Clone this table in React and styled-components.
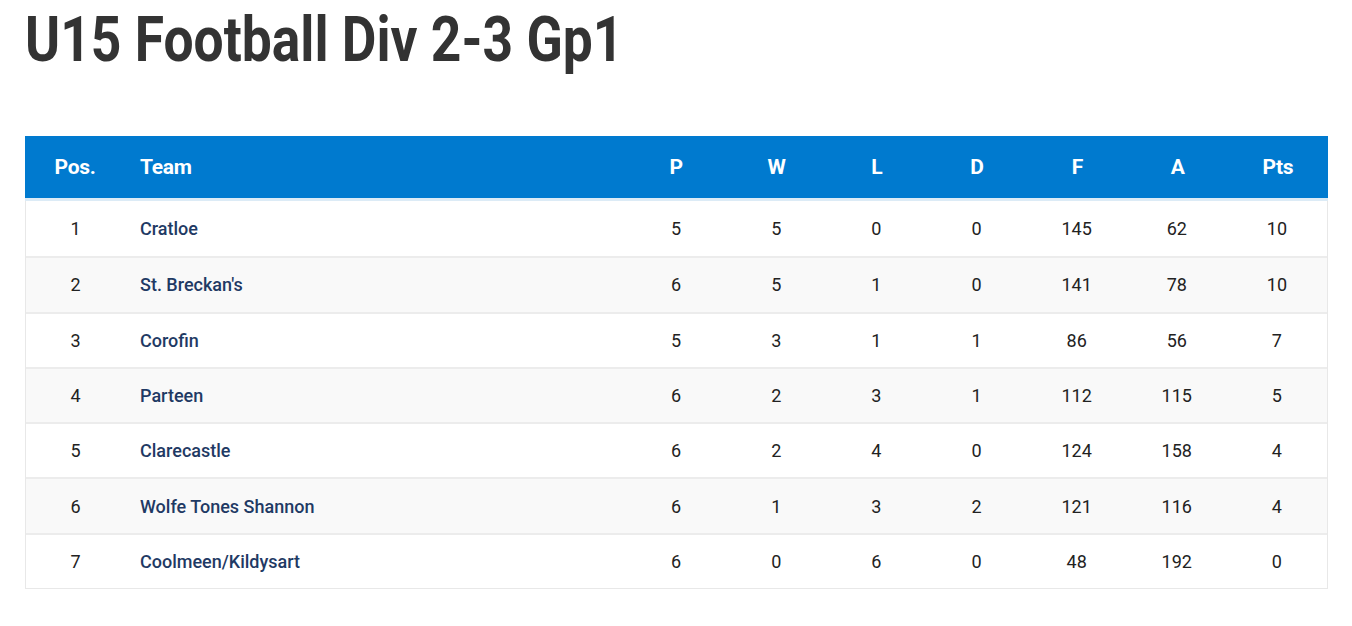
import styled, { createGlobalStyle } from 'styled-components';

const GlobalStyle = createGlobalStyle`
  body {
    margin: 0;
    background: #fff;
    font-family: Roboto, "Liberation Sans", sans-serif;
  }
`;

const Page = styled.div`
  padding: 9px 24px 36px 25px;
`;

const Title = styled.h1`
  margin: 0 0 65px;
  font-family: Roboto, sans-serif;
  font-weight: 700;
  font-size: 63px;
  line-height: 62px;
  color: #333;
  transform: scaleX(0.847);
  transform-origin: left center;
  white-space: nowrap;
`;

const Table = styled.div`
  box-sizing: border-box;
  width: 1303px;
  border: 1px solid #e8e8e8;
  border-top: none;
`;

const Grid = styled.div`
  display: grid;
  grid-template-columns: 99px 501px repeat(7, 1fr);
  align-items: center;
  box-sizing: border-box;
`;

const HeadRow = styled(Grid)`
  height: 65px;
  margin: 0 -1px;
  grid-template-columns: 100px 501px repeat(7, 1fr);
  background: #007acf;
  color: #fff;
  font-weight: 700;
  font-size: 21px;
  border-bottom: 3px solid #dcebf6;
`;

const HeadCell = styled.div`
  text-align: ${p => (p.$left ? 'left' : 'center')};
  padding-left: ${p => (p.$left ? '15px' : '0')};
  letter-spacing: -0.3px;
`;

const Row = styled(Grid)`
  height: 55.3px;
  background: ${p => (p.$alt ? '#f9f9f9' : '#fff')};
  border-top: ${p => (p.$first ? 'none' : '2px solid #ececec')};
  font-size: 18px;
  color: #222;
`;

const Cell = styled.div`
  text-align: center;
`;

const Team = styled.div`
  padding-left: 15px;
  font-weight: 500;
  color: #1f3a64;
`;

const teams = [
  [1, 'Cratloe', 5, 5, 0, 0, 145, 62, 10],
  [2, "St. Breckan's", 6, 5, 1, 0, 141, 78, 10],
  [3, 'Corofin', 5, 3, 1, 1, 86, 56, 7],
  [4, 'Parteen', 6, 2, 3, 1, 112, 115, 5],
  [5, 'Clarecastle', 6, 2, 4, 0, 124, 158, 4],
  [6, 'Wolfe Tones Shannon', 6, 1, 3, 2, 121, 116, 4],
  [7, 'Coolmeen/Kildysart', 6, 0, 6, 0, 48, 192, 0],
];

const cols = ['P', 'W', 'L', 'D', 'F', 'A', 'Pts'];

export default function App() {
  return (
    <Page>
      <GlobalStyle />
      <Title>U15 Football Div 2-3 Gp1</Title>
      <Table>
        <HeadRow>
          <HeadCell>Pos.</HeadCell>
          <HeadCell $left>Team</HeadCell>
          {cols.map(c => (
            <HeadCell key={c}>{c}</HeadCell>
          ))}
        </HeadRow>
        {teams.map(([pos, name, ...stats], i) => (
          <Row key={pos} $alt={i % 2 === 1} $first={i === 0}>
            <Cell>{pos}</Cell>
            <Team>{name}</Team>
            {stats.map((s, j) => (
              <Cell key={j}>{s}</Cell>
            ))}
          </Row>
        ))}
      </Table>
    </Page>
  );
}
